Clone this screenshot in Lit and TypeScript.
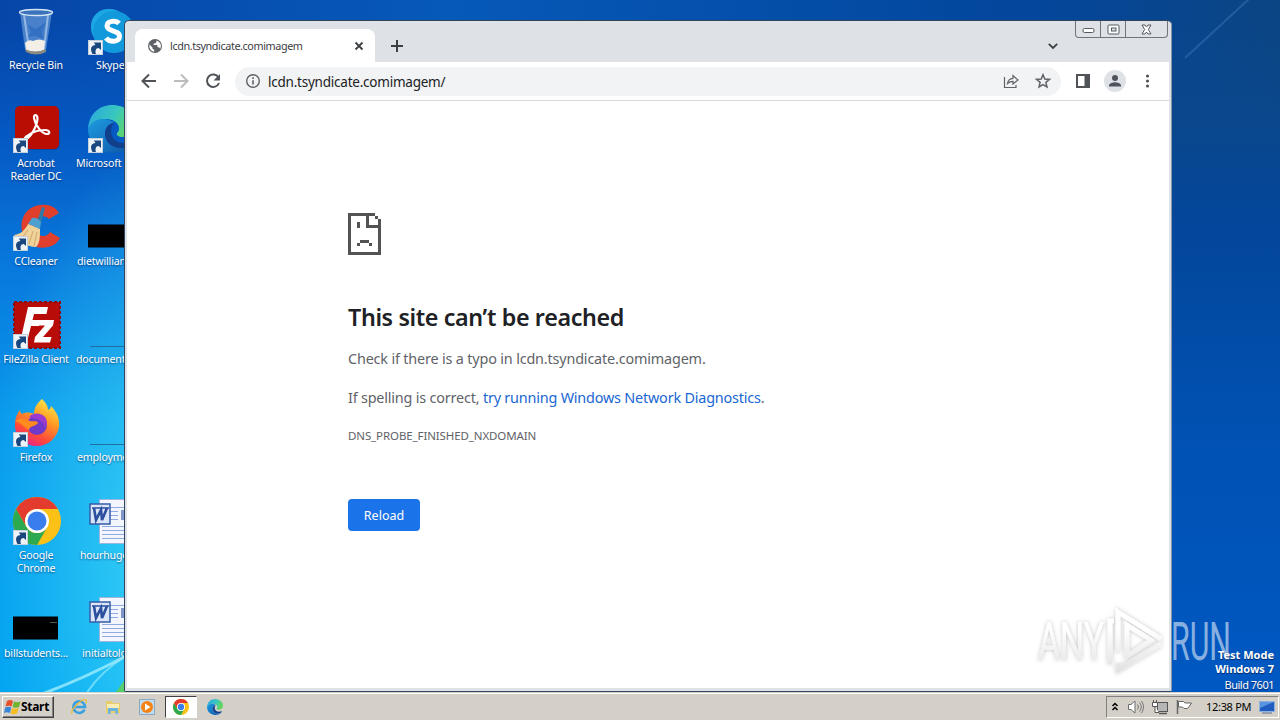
import { LitElement, html, css, svg, nothing } from 'lit';
import { customElement, property } from 'lit/decorators.js';

const shortcutArrow = svg`
  <rect x="0.5" y="32.500" width="14" height="14" fill="#eef3f8" stroke="#c3d0dd"/>
  <path d="M4.500 46C1.500 40.500 3.500 37 7.500 37L5.800 34.500H13V42l-2.300-2c-3 0-3.800 3-2.700 6z" fill="#1b477f"/>`;

const chromeLogo = svg`
  <circle cx="24" cy="24" r="24" fill="#fbc116"/>
  <path d="M3.200 12A24 24 0 0 0 24 48L34.400 30A12 12 0 0 1 13.600 30z" fill="#2da94f"/>
  <path d="M3.200 12A24 24 0 0 1 44.800 12H24a12 12 0 0 0-10.400 18z" fill="#e33b2e"/>
  <circle cx="24" cy="24" r="12" fill="#fff"/>
  <circle cx="24" cy="24" r="9.500" fill="#3a7ded"/>`;

const edgeLogo = svg`
  <defs>
    <linearGradient id="edgeTop" x1="0" x2="1" y2=".3"><stop offset="0" stop-color="#2aa5dd"/><stop offset=".6" stop-color="#39c7c0"/><stop offset="1" stop-color="#62d65c"/></linearGradient>
    <linearGradient id="edgeLow" x1="0" x2="1" y2="1"><stop offset="0" stop-color="#1e9de0"/><stop offset="1" stop-color="#0d54a8"/></linearGradient>
  </defs>
  <path d="M0 24C1 9 11 0 24 0c14 0 24 9 24 20 0 8-6 12-13 12-5 0-7-2-6-4 2-2 2-4 2-5 0-5-6-9-13-9C9 14 2 19 0 24z" fill="url(#edgeTop)"/>
  <path d="M0 24c2-6 8-10 15-10 5 0 9 2 11 4-5 0-9 5-9 11 0 8 7 14 16 14 4 0 8-1 11-4-4 6-11 9-19 9C10 48 0 37 0 24z" fill="url(#edgeLow)"/>
  <path d="M17 29c0 8 7 14 16 14 4 0 8-1 11-4 1-1 0-2-1-2-9 3-20 0-20-11 0-3 1-6 3-8-5 0-9 5-9 11z" fill="#123f8b"/>`;

const wordDoc = svg`
  <path d="M11.500 1.500h36v44h-36z" fill="#f3f6ff" stroke="#9fb4de"/>
  <path d="M21 9.500h24M21 13.500h9M21 17.500h9M21 21.500h9M14 28.500h30M14 32.500h30M14 36.500h30M14 40.500h30" stroke="#8fabdf"/>
  <path d="M33 12h12v10H33z" fill="#7f97cc"/>
  <rect x="2" y="6" width="20" height="20" fill="#dbe5f8" stroke="#345ba8" stroke-width="1.500"/>
  <path d="M4 10h6M10 10h6M15 10h6" stroke="#2b4f9e" stroke-width="1.500"/>
  <path d="M6 10l2 12 5-10 1 10 5-12" fill="none" stroke="#2b4f9e" stroke-width="2.600"/>`;

const art: Record<string, unknown> = {
  bin: svg`
    <path d="M7 4l5 38q11 5 21 0l6-38z" fill="#8bb9ea" opacity=".5"/>
    <path d="M11 7l5 34M35 7l-4 34" stroke="#dceefc" stroke-width="2" opacity=".5"/>
    <path d="M15 17l8 4 10-7-4 10 2 7-9-3-7 1 3-5z" fill="#2464bd" opacity=".6"/>
    <path d="M12 35q3-4 8-2 6-3 12 0l-1 9q-9 4-18 0z" fill="#f3efe6"/>
    <path d="M12 41q10 5 21 0v3q-10 5-20 0z" fill="#8a8a80"/>
    <ellipse cx="23" cy="4.500" rx="16.500" ry="3" fill="#3a73bb" stroke="#d5e4f2" stroke-width="1.400"/>`,
  acrobat: svg`
    <rect x="2.500" y="1" width="44" height="43" rx="5" fill="#052f80" opacity=".5"/>
    <rect x="2" y="0" width="44" height="43" rx="5" fill="#b90c03"/>
    <path d="M13 33c5-2 11-13 11.500-20 0-5-4-5-3.500-1C22 19 29 28 34 28c3.500 0 3-4-2-4-7 0-13 2-18 6-3 2-3 4-1 3z" fill="none" stroke="#fff" stroke-width="2.200"/>
    ${shortcutArrow}`,
  ccleaner: svg`
    <path d="M46 9C41 0 29-1 20 3 11 7 7 17 9 27c3 12 14 19 26 16 6-1 10-5 12-9l-10-6c-2 4-7 5-11 3-5-4-5-11-1-16 3-4 8-3 11 0z" fill="#df3f2c"/>
    <path d="M29 3l3 1-4 15-4-1z" fill="#2f7ba8"/><path d="M19 14q5-1 9 4l-1 7-12-5z" fill="#4da0d0"/>
    <path d="M15 20l12 5c0 8 0 14-4 18C14 43 6 38 1 31c7-1 11-5 14-11z" fill="#f0d29a"/>
    <path d="M15 26l-7 9M20 27l-4 13M24 28l-3 14" stroke="#d0a86c"/>
    ${shortcutArrow}`,
  filezilla: svg`
    <g transform="translate(0 -1)">
      <rect x="1" y="1" width="46" height="46" fill="#b80c08" stroke="#8e0a08" stroke-width="2" stroke-dasharray="3 2"/>
      <path d="M15 6h20l-1.500 7H21l-1.500 6h8l-1.500 6h-8L15 37H8z" fill="#fff"/>
      <path d="M26 19h15l-1 5.500L30 36h8.500L37 41.500H21l1-5.500 10-11.500h-7.500z" fill="#fff"/>
    </g>
    ${shortcutArrow}`,
  firefox: svg`
    <defs><linearGradient id="foxBody" x1=".8" x2=".3" y2="1"><stop offset="0" stop-color="#fff04a"/><stop offset=".4" stop-color="#ff9a24"/><stop offset=".75" stop-color="#ff4a3a"/><stop offset="1" stop-color="#e8208c"/></linearGradient></defs>
    <path d="M29-1c4 4 6 7 6 11 2-1 3-2 3-4 6 6 9 13 8 21-2 11-11 19-22 19S2 38 2 26c0-6 1-11 5-16 0 2 1 3 2 4 3-2 8-2 12 0 0-6 3-11 8-15z" fill="url(#foxBody)"/>
    <circle cx="24" cy="25" r="10" fill="#7139c9"/>
    <path d="M2 21c5-4 10-2 15 0 3 1 7-1 8 2-3 4-8 2-9 7-4-1-5-6-14-9z" fill="#ff8a1e"/>
    <path d="M16 17c5-5 12-4 16 0 3 4 2 8 0 11 0-6-6-9-16-11z" fill="#9c3ad0"/>
    ${shortcutArrow}`,
  chrome: svg`<g transform="translate(0 -1)">${chromeLogo}</g>${shortcutArrow}`,
  black: svg`<rect x="0" y="20.500" width="45" height="23" fill="#000"/><path d="M37 26.500h7" stroke="#555"/>`,
  skype: svg`
    <rect x="3" y="1" width="36" height="36" rx="17" fill="#1ca7e4"/>
    <circle cx="26" cy="24" r="21" fill="#1199dc"/>
    <path d="M31 15.500c-3-3.500-12-3-12 2.500 0 6 12.500 3.500 12.500 10.500 0 6-10 6-13.500 1.500" fill="none" stroke="#fff" stroke-width="5"/>
    ${shortcutArrow}`,
  edge: svg`<g transform="translate(0 -1)">${edgeLogo}</g>${shortcutArrow}`,
  terminal: svg`<rect x="0" y="20.500" width="46" height="23" fill="#000"/>`,
  line: svg`<path d="M2 44.500h44" stroke="#1c6f9e"/>`,
  word: wordDoc,
};

@customElement('desktop-icon')
export class DesktopIcon extends LitElement {
  @property() kind = '';
  @property() label = '';
  // distance of the label from the cell's left edge; centred when it is negative
  @property({ type: Number }) inset = -1;

  static styles = css`
    :host {
      display: block;
      width: 72px;
      height: 98px;
    }
    svg {
      display: block;
      width: 48px;
      height: 48px;
      margin-left: 13px;
      overflow: visible;
    }
    .label {
      margin-top: 3px;
      color: #fff;
      font: 10.600px/13px 'Noto Sans', sans-serif;
      letter-spacing: -0.18px;
      text-align: center;
      text-shadow: 0 1px 2px rgba(0, 20, 70, 0.6);
      white-space: pre;
    }
    .fixed {
      text-align: left;
    }
  `;

  render() {
    const fixed = this.inset >= 0;
    return html`
      <svg viewBox="0 0 48 48">${art[this.kind]}</svg>
      <div class="label ${fixed ? 'fixed' : ''}" style=${fixed ? `padding-left:${this.inset}px` : nothing}>${this.label}</div>
    `;
  }
}

const shortcuts = [
  { kind: 'bin', label: 'Recycle Bin' },
  { kind: 'acrobat', label: 'Acrobat\nReader DC' },
  { kind: 'ccleaner', label: 'CCleaner' },
  { kind: 'filezilla', label: 'FileZilla Client' },
  { kind: 'firefox', label: 'Firefox' },
  { kind: 'chrome', label: 'Google\nChrome' },
  { kind: 'black', label: 'billstudents...' },
  { kind: 'skype', label: 'Skype', inset: 21 },
  { kind: 'edge', label: 'Microsoft', inset: 1 },
  { kind: 'terminal', label: 'dietwilliam', inset: 2 },
  { kind: 'line', label: 'document', inset: 1 },
  { kind: 'line', label: 'employme', inset: 2 },
  { kind: 'word', label: 'hourhuge', inset: 5 },
  { kind: 'word', label: 'initialtolo', inset: 7 },
];

@customElement('browser-window')
export class BrowserWindow extends LitElement {
  static styles = css`
    :host {
      display: flex;
      flex-direction: column;
      box-sizing: border-box;
      border: 1px solid #30465f;
      border-right-color: #8796a8;
      border-radius: 5px 5px 2px 2px;
      background: #dee1e6;
      padding: 0 2px 3px;
      font-family: 'Noto Sans', sans-serif;
    }
    svg {
      display: block;
      flex: none;
      overflow: visible;
    }
    .strip {
      display: flex;
      height: 41px;
      align-items: flex-end;
    }
    .tab {
      display: flex;
      align-items: center;
      box-sizing: border-box;
      width: 240px;
      height: 33px;
      margin-left: 8px;
      padding: 0 10px 0 13px;
      border-radius: 8px 8px 0 0;
      background: #fff;
    }
    .title {
      flex: 1;
      margin-left: 8px;
      font-size: 10.800px;
      letter-spacing: -0.4px;
      color: #3c4043;
    }
    .plus {
      margin: 0 0 10px 16px;
    }
    .chevron {
      margin: 0 0 10px auto;
    }
    .caption {
      display: flex;
      align-self: flex-start;
      box-sizing: border-box;
      height: 17px;
      margin: 0 1px 0 16px;
      border: 1px solid #70757c;
      border-top: 0;
      border-radius: 0 0 4px 4px;
    }
    .caption span {
      display: grid;
      place-items: center;
      width: 24px;
      border-right: 1px solid #70757c;
    }
    .caption span:last-child {
      width: 41px;
      border: 0;
    }
    .bar {
      display: flex;
      align-items: center;
      height: 38px;
      border-bottom: 1px solid #d8dadd;
      background: #fff;
      padding: 0 13px 0 14px;
    }
    .nav {
      display: flex;
      gap: 16px;
      margin-right: 14px;
    }
    .omnibox {
      display: flex;
      align-items: center;
      box-sizing: border-box;
      flex: 1;
      height: 29px;
      padding: 0 10px;
      border-radius: 15px;
      background: #f1f3f4;
    }
    .url {
      flex: 1;
      margin-left: 7px;
      padding-top: 2px;
      font-size: 13.500px;
      letter-spacing: -0.23px;
      color: #202124;
    }
    .star {
      margin-left: 16px;
    }
    .panel {
      margin-left: 14px;
    }
    .avatar {
      margin: 0 14px 0 13px;
    }
    .page {
      flex: 1;
      background: #fff;
      padding: 112px 0 0 221px;
      color: #5f6368;
    }
    h1 {
      margin: 44px 0 0;
      font-size: 23.300px;
      line-height: 36px;
      font-weight: 600;
      letter-spacing: -0.37px;
      color: #202124;
    }
    p {
      margin: 0;
      font-size: 14.400px;
      line-height: 24px;
      letter-spacing: -0.17px;
    }
    .first {
      margin-top: 12px;
    }
    .second {
      margin-top: 15px;
      letter-spacing: -0.19px;
    }
    a {
      color: #1a66d2;
    }
    .code {
      margin-top: 14px;
      font-size: 11.500px;
      line-height: 24px;
      letter-spacing: -0.11px;
    }
    button {
      display: block;
      width: 72px;
      height: 32px;
      margin: 51px 0 0;
      padding: 0;
      border: 0;
      border-radius: 4px;
      background: #1a73e8;
      color: #fff;
      font: 12.500px 'Noto Sans', sans-serif;
    }
  `;

  render() {
    return html`
      <div class="strip">
        <div class="tab">
          <svg width="14" height="14" viewBox="0 0 14 14">
            <circle cx="7" cy="7" r="7" fill="#5f6368"/>
            <path d="M1.500 5.500l3 3v1.200l1.700 1v2A5.700 5.700 0 0 1 1.500 5.500zM8.500 1.500v1.600L7 4.500H5.600V6h3.800v2l2 .5.800 1.500a5.700 5.700 0 0 0-3.700-8.500z" fill="#fff"/>
          </svg>
          <span class="title">lcdn.tsyndicate.comimagem</span>
          <svg width="12" height="12"><path d="M2.500 2.500l7 7M9.500 2.500l-7 7" stroke="#3c4043" stroke-width="1.800"/></svg>
        </div>
        <svg class="plus" width="12" height="12"><path d="M6 0v12M0 6h12" stroke="#3c4043" stroke-width="2"/></svg>
        <svg class="chevron" width="12" height="12"><path d="M1.800 3.800L6 8l4.200-4.200" fill="none" stroke="#3c4043" stroke-width="1.800"/></svg>
        <div class="caption">
          <span><svg width="13" height="7"><rect x="1" y="2.500" width="11" height="4" rx="1.500" fill="#fff" stroke="#555a61"/></svg></span>
          <span><svg width="13" height="11"><rect x="1" y="1" width="11" height="9" rx="1" fill="#fff" stroke="#555a61"/><rect x="4.500" y="4" width="4.500" height="3" fill="#dee1e6" stroke="#555a61"/></svg></span>
          <span><svg width="13" height="11"><path d="M2 1h3l1.500 2L8 1h3L8.300 5.500 11 10H8L6.500 8 5 10H2l2.700-4.500z" fill="#fff" stroke="#555a61"/></svg></span>
        </div>
      </div>
      <div class="bar">
        <div class="nav">
          <svg width="16" height="16"><path d="M15 8H2M8 1.500L1.500 8 8 14.500" fill="none" stroke="#505357" stroke-width="2"/></svg>
          <svg width="16" height="16"><path d="M1 8h13M8 1.500L14.500 8 8 14.500" fill="none" stroke="#babcbe" stroke-width="2"/></svg>
          <svg width="16" height="16"><path d="M13.500 4.500A6.200 6.200 0 1 0 14 10" fill="none" stroke="#505357" stroke-width="2"/><path d="M15 1v6.500H8.500z" fill="#505357"/></svg>
        </div>
        <div class="omnibox">
          <svg width="16" height="16"><circle cx="8" cy="8" r="6.300" fill="none" stroke="#5f6368" stroke-width="1.400"/><path d="M8 7.200v4.300M8 4.300v1.600" stroke="#5f6368" stroke-width="1.600"/></svg>
          <span class="url">lcdn.tsyndicate.comimagem/</span>
          <svg width="16" height="16"><path d="M1.500 4v10.500h11.500V12M4.500 10.500C5 6.500 7.500 5.500 10 5.300V2.500L15 7l-5 4V8.300c-2.500 0-4 .7-5.500 2.200z" fill="none" stroke="#5f6368" stroke-width="1.200"/></svg>
          <svg class="star" width="16" height="16"><path d="M8 1.700l1.800 4.300 4.700.4-3.600 3 1.100 4.600L8 11.600 4 14l1.100-4.600-3.600-3 4.700-.4z" fill="none" stroke="#5f6368" stroke-width="1.500"/></svg>
        </div>
        <svg class="panel" width="16" height="16"><rect x="2" y="2" width="12" height="12" fill="none" stroke="#505357" stroke-width="2"/><path d="M9.500 2H14v12H9.500z" fill="#505357"/></svg>
        <svg class="avatar" width="22" height="22"><circle cx="11" cy="11" r="11" fill="#dee1e6"/><circle cx="11" cy="8" r="3" fill="#4e535b"/><path d="M5 16.500v-1.200c0-2 4-3.100 6-3.100s6 1.100 6 3.100v1.200z" fill="#4e535b"/></svg>
        <svg width="16" height="16"><g fill="#505357"><circle cx="7.500" cy="3" r="1.600"/><circle cx="7.500" cy="8" r="1.600"/><circle cx="7.500" cy="13" r="1.600"/></g></svg>
      </div>
      <div class="page">
        <svg width="33" height="42" viewBox="0 0 11 14" shape-rendering="crispEdges">
          <path d="M0 0h9v1H7v3h3V2h1v12H0zM1 1v12h9V5H6V1zM9 1h1v1H9zM3 3h1v2H3zM4 9h3v1H4zM3 10h1v1H3zM7 10h1v1H7z" fill="#535353" fill-rule="evenodd"/>
        </svg>
        <h1>This site can’t be reached</h1>
        <p class="first">Check if there is a typo in lcdn.tsyndicate.comimagem.</p>
        <p class="second">If spelling is correct, <a>try running Windows Network Diagnostics</a>.</p>
        <div class="code">DNS_PROBE_FINISHED_NXDOMAIN</div>
        <button>Reload</button>
      </div>
    `;
  }
}

@customElement('task-bar')
export class TaskBar extends LitElement {
  static styles = css`
    :host {
      display: flex;
      align-items: center;
      box-sizing: border-box;
      height: 28px;
      padding: 1px 1px 1px 2px;
      border-top: 1px solid #d4d0c8;
      background: #d4d0c8;
      box-shadow: inset 0 1px #fff;
      font: 11px 'Noto Sans', sans-serif;
      color: #000;
    }
    svg {
      display: block;
      flex: none;
    }
    .start {
      display: flex;
      align-items: center;
      box-sizing: border-box;
      width: 52px;
      height: 22px;
      padding: 0 0 0 1px;
      border: 1px solid;
      border-color: #fff #404040 #404040 #fff;
      box-shadow: inset -1px -1px #808080;
      font: bold 12px 'Noto Sans', sans-serif;
      letter-spacing: -0.3px;
    }
    .launch {
      display: flex;
      margin-left: 9px;
      gap: 2px;
    }
    .slot {
      display: grid;
      place-items: center;
      box-sizing: border-box;
      width: 32px;
      height: 22px;
    }
    .active {
      border: 1px solid;
      border-color: #404040 #fff #fff #404040;
      background: #fff;
    }
    .tray {
      display: flex;
      align-items: center;
      gap: 8px;
      box-sizing: border-box;
      width: 173px;
      height: 22px;
      margin-left: auto;
      padding: 0 3px 0 4px;
      border: 1px solid;
      border-color: #808080 #fff #fff #808080;
    }
    .clock {
      margin: 0 0 0 5px;
      letter-spacing: -0.3px;
      white-space: nowrap;
    }
  `;

  render() {
    return html`
      <div class="start">
        <svg width="17" height="16">
          <path d="M3 2q3-2 6 0L7.500 7.500q-3-1.500-6 0z" fill="#e8502a"/><path d="M10 2.500q3 1.500 6.500 0L15 8q-3 1.500-6.500 0z" fill="#71b52f"/>
          <path d="M1.200 8.500q3-1.500 6 0L6 14q-3-1.500-6 0z" fill="#3a86d8"/><path d="M8.200 9q3 1.500 6.500 0L13 14.500q-3 1.500-6.500 0z" fill="#f6bd22"/>
        </svg>Start
      </div>
      <div class="launch">
        <span class="slot"><svg width="16" height="16"><path d="M13.500 10.500A5.800 5.800 0 1 1 14 8H4" fill="none" stroke="#3aa0e2" stroke-width="2.600"/><path d="M1 14.500C-1 11 11-1 15 1c1 .6.500 2.500 0 3.500" fill="none" stroke="#e8bd3c" stroke-width="1.300"/></svg></span>
        <span class="slot"><svg width="16" height="16"><path d="M1 2h6l1 2h7v10H1z" fill="#e9cc6c"/><path d="M2 5h12v4H2z" fill="#f9edb4"/><path d="M3 15V9h10v6h-2.500v-3h-5v3z" fill="#6ab4df"/></svg></span>
        <span class="slot"><svg width="16" height="16"><rect x=".5" y=".5" width="15" height="15" fill="#c2dcee" stroke="#8aa9c4"/><circle cx="8" cy="8" r="6" fill="#f48315"/><path d="M6 4.500v7L11.500 8z" fill="#fff"/></svg></span>
        <span class="slot active"><svg width="16" height="16" viewBox="0 0 48 48">${chromeLogo}</svg></span>
        <span class="slot"><svg width="16" height="16" viewBox="0 0 48 48">${edgeLogo}</svg></span>
      </div>
      <div class="tray">
        <svg width="8" height="10"><path d="M1.500 4L4 1.500 6.500 4M1.500 8L4 5.500 6.500 8" fill="none" stroke="#000" stroke-width="1.500"/></svg>
        <svg width="17" height="16"><path d="M1.500 5.500H4L8 2v12l-4-3.500H1.500z" fill="#fff" stroke="#6d6d6d"/><path d="M10.500 5.500q2 2.500 0 5M12.500 3.500q3.500 4.500 0 9M14.500 2q4 6 0 12" fill="none" stroke="#777"/></svg>
        <svg width="16" height="16"><rect x="5.500" y="3.500" width="10" height="9" fill="#b5b5b5" stroke="#555"/><path d="M7 14.500h8" stroke="#555" stroke-width="1.500"/><path d="M.5 3.500h5v4h-5zM1.500 1v2.500M4.500 1v2.500M3 7.500v6h4" fill="#fff" stroke="#555"/></svg>
        <svg width="17" height="16"><path d="M1.500 1v14" stroke="#666" stroke-width="1.500"/><path d="M2.500 2.500h5l1.500 1.500h6.500l-2 3 -2 2.500H8L6.500 8h-4z" fill="#fff" stroke="#666"/></svg>
        <span class="clock">12:38 PM</span>
        <svg width="16" height="14"><rect x=".5" y="1.500" width="15" height="10" fill="#1e5cbf" stroke="#8fb1e0"/><path d="M1 2h14L1 8z" fill="#5a93e0"/><path d="M3 13h10" stroke="#546a8e"/></svg>
      </div>
    `;
  }
}

@customElement('app-root')
export class AppRoot extends LitElement {
  static styles = css`
    :host {
      display: flex;
      flex-direction: column;
      position: relative;
      width: 1280px;
      height: 720px;
      overflow: hidden;
    }
    .desktop {
      position: relative;
      flex: 1;
      background:
        radial-gradient(ellipse 190px 420px at 170px 560px, rgba(70, 225, 248, 0.8), rgba(40, 190, 245, 0) 100%),
        linear-gradient(rgba(6, 70, 168, 0) 20px, #0556c0 18%, #0878dc 38%, #0898ec 60%, #00a2f2 100%) 0 0 / 200px 100% no-repeat,
        linear-gradient(rgba(9, 64, 135, 0) 20px, #0a478c 120px, #03469a 32%, #0052b4 65%, #0058c2) 1160px 0 / 120px 100% no-repeat,
        linear-gradient(90deg, #0646a8, #0659b9 35%, #03469c 80%, #0c4583);
    }
    .rays {
      position: absolute;
      inset: 0;
    }
    .icons {
      display: grid;
      grid-template-rows: repeat(7, 98px);
      grid-auto-flow: column;
      grid-auto-columns: 75px;
      padding-top: 8px;
      height: 684px;
      box-sizing: border-box;
      width: 150px;
    }
    browser-window {
      position: absolute;
      left: 124px;
      top: 20px;
      width: 1048px;
      height: 672px;
    }
    .mark {
      position: absolute;
      left: 1030px;
      top: 600px;
      overflow: visible;
      font-family: Roboto, sans-serif;
    }
    .build {
      position: absolute;
      right: 6px;
      bottom: 0;
      color: #fff;
      text-align: right;
      font: bold 11px/14px 'Noto Sans', sans-serif;
      text-shadow: 0 1px 1px rgba(0, 20, 70, 0.7);
    }
    .build span {
      display: block;
    }
    .build .number {
      font-weight: normal;
      line-height: 18px;
      margin-bottom: -2px;
      letter-spacing: -0.5px;
    }
  `;

  render() {
    return html`
      <div class="desktop">
        <svg class="rays" width="1280" height="692">
          <path d="M1185 58L1250-2" fill="none" stroke="#5f94cc" stroke-opacity=".3" stroke-width="2"/>
          <path d="M42 694Q85 678 126 656" fill="none" stroke="#a6f0ff" stroke-opacity=".75" stroke-width="3"/>
          <path d="M86 694Q100 672 126 656" fill="none" stroke="#a6f0ff" stroke-opacity=".6" stroke-width="2"/>
          <path d="M116 692l10-14v14z" fill="#56cf6a"/>
        </svg>
        <div class="icons">
          ${shortcuts.map((s) => html`<desktop-icon .kind=${s.kind} .label=${s.label} .inset=${s.inset ?? -1}></desktop-icon>`)}
        </div>
        <browser-window></browser-window>
        <svg class="mark" width="210" height="80">
          <defs>
            <linearGradient id="fade" x2="0" y2="1"><stop offset=".3" stop-color="#fff"/><stop offset="1" stop-color="#e2e2e2"/></linearGradient>
            <filter id="soft" x="-10%" y="-10%" width="120%" height="130%"><feDropShadow dx="0" dy="0" stdDeviation="2" flood-color="#000" flood-opacity=".26"/></filter>
          </defs>
          <g filter="url(#soft)">
            <text x="8" y="60" font-size="53" textLength="66" lengthAdjust="spacingAndGlyphs" fill="url(#fade)">ANY</text>
            <path d="M80 64V21h4M88 52V12l43 27M88 64v6l43-26M97 25v31l24-16z" fill="none" stroke="url(#fade)" stroke-width="4.500"/>
          </g>
          <text x="141" y="60" font-size="53" textLength="60" lengthAdjust="spacingAndGlyphs" fill="#fff" fill-opacity=".55">RUN</text>
        </svg>
        <div class="build"><span>Test Mode</span><span>Windows 7</span><span class="number">Build 7601</span></div>
      </div>
      <task-bar></task-bar>
    `;
  }
}
